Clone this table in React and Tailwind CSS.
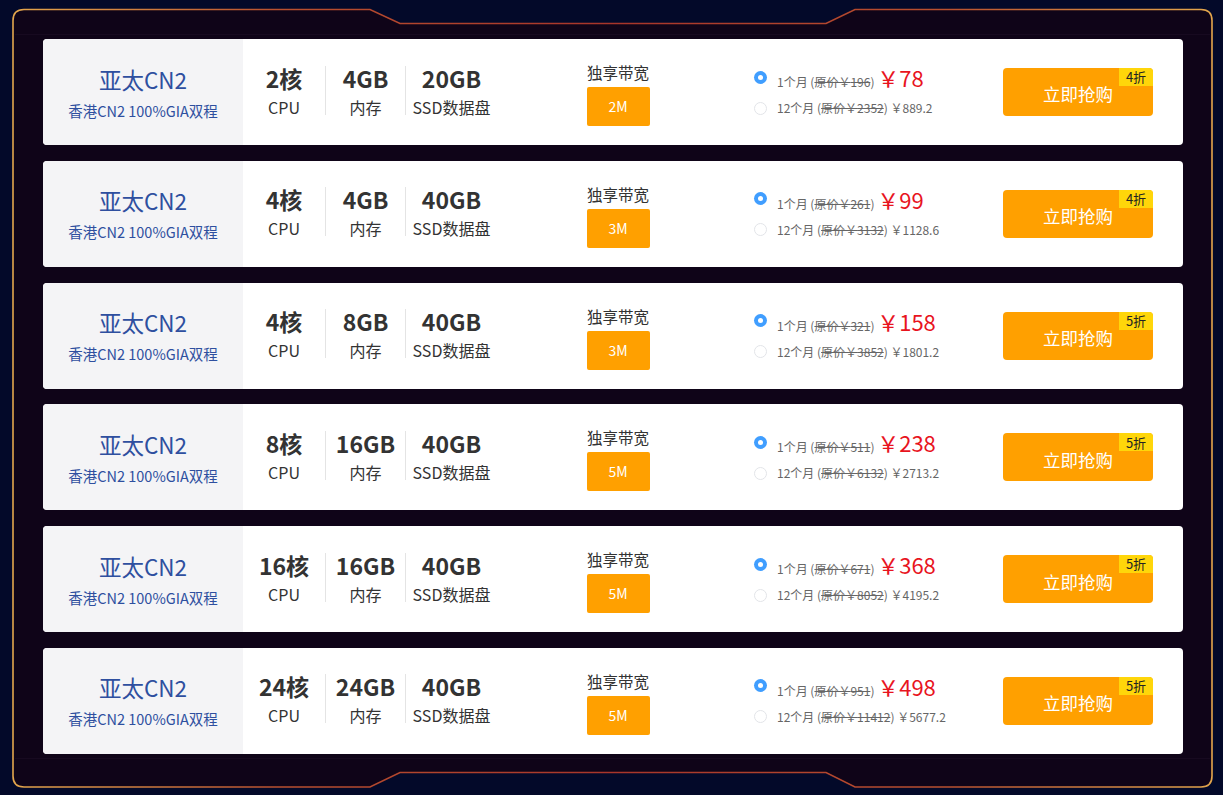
import React from 'react'

const plans = [
  { cpu: '2核', ram: '4GB', disk: '20GB', bw: '2M', orig: '196', price: '78', origYear: '2352', year: '889.2', off: '4折' },
  { cpu: '4核', ram: '4GB', disk: '40GB', bw: '3M', orig: '261', price: '99', origYear: '3132', year: '1128.6', off: '4折' },
  { cpu: '4核', ram: '8GB', disk: '40GB', bw: '3M', orig: '321', price: '158', origYear: '3852', year: '1801.2', off: '5折' },
  { cpu: '8核', ram: '16GB', disk: '40GB', bw: '5M', orig: '511', price: '238', origYear: '6132', year: '2713.2', off: '5折' },
  { cpu: '16核', ram: '16GB', disk: '40GB', bw: '5M', orig: '671', price: '368', origYear: '8052', year: '4195.2', off: '5折' },
  { cpu: '24核', ram: '24GB', disk: '40GB', bw: '5M', orig: '951', price: '498', origYear: '11412', year: '5677.2', off: '5折' },
]

function Frame() {
  return (
    <svg className="absolute inset-0" width="1223" height="795" viewBox="0 0 1223 795">
      <defs>
        <linearGradient id="edge" x1="0" y1="0" x2="1" y2="0">
          <stop offset="0%" stopColor="#e3a64c" />
          <stop offset="22%" stopColor="#b8502f" />
          <stop offset="50%" stopColor="#a8352a" />
          <stop offset="78%" stopColor="#b8502f" />
          <stop offset="100%" stopColor="#e3a64c" />
        </linearGradient>
      </defs>
      <path
        d="M24 9.5 H370 L400 23.5 H826 L855 9.5 H1201 Q1212 9.5 1212 20.5 V776 Q1212 787 1201 787 H855 L826 772.5 H400 L370 787 H24 Q13 787 13 776 V20.5 Q13 9.5 24 9.5 Z"
        fill="#0f0418"
        stroke="url(#edge)"
        strokeWidth="1.6"
      />
      <line x1="15" y1="34.5" x2="1210" y2="34.5" stroke="#170a20" strokeWidth="1" />
      <line x1="15" y1="758.5" x2="1210" y2="758.5" stroke="#170a20" strokeWidth="1" />
    </svg>
  )
}

function Radio({ on }) {
  return on ? (
    <span className="flex h-[13px] w-[13px] items-center justify-center rounded-full bg-[#409eff]">
      <span className="h-[5px] w-[5px] rounded-full bg-white" />
    </span>
  ) : (
    <span className="h-[13px] w-[13px] rounded-full border border-[#e2e4e8] bg-white" />
  )
}

function PlanRow({ p }) {
  return (
    <div className="flex h-[106px] overflow-hidden rounded-[4px] bg-[#fff]">
      <div className="flex w-[200px] flex-col items-center justify-center bg-[#f4f4f6] text-[#2e4f9f]">
        <p className="text-[22.5px] leading-[28px]">亚太CN2</p>
        <p className="mt-[9px] text-[14.5px] leading-[18px]">香港CN2 100%GIA双程</p>
      </div>

      <div className="flex w-[254px] items-center pb-[4px] text-[#333]">
        <div className="flex w-[82px] flex-col items-center">
          <p className="text-[23px] font-bold leading-[28px]">{p.cpu}</p>
          <p className="mt-[5px] text-[16px] leading-[20px]">CPU</p>
        </div>
        <div className="h-[49px] w-px bg-[#e4e4e4]" />
        <div className="flex w-[79px] flex-col items-center">
          <p className="text-[23px] font-bold leading-[28px]">{p.ram}</p>
          <p className="mt-[5px] text-[16px] leading-[20px]">内存</p>
        </div>
        <div className="h-[49px] w-px bg-[#e4e4e4]" />
        <div className="flex w-[91px] flex-col items-center">
          <p className="text-[23px] font-bold leading-[28px]">{p.disk}</p>
          <p className="mt-[5px] text-[16px] leading-[20px]">SSD数据盘</p>
        </div>
      </div>

      <div className="ml-[89px] flex w-[64px] flex-col items-center pt-[23px]">
        <p className="text-[15.5px] leading-[20px] text-[#333]">独享带宽</p>
        <div className="mt-[5px] flex h-[39px] w-[63px] items-center justify-center rounded-[2px] bg-[#ffa000] text-[14px] text-white">
          {p.bw}
        </div>
      </div>

      <div className="ml-[102px] flex w-[251px] flex-col justify-center pb-[2px] pl-[2px] text-[12px] text-[#666]">
        <div className="flex h-[28px] items-center gap-[10px]">
          <Radio on />
          <span>
            1个月 (<span className="line-through">原价￥{p.orig}</span>){' '}
            <span className="text-[22px] leading-[28px] text-[#e8141e]">￥{p.price}</span>
          </span>
        </div>
        <div className="mt-[6px] flex h-[22px] items-center gap-[10px]">
          <Radio />
          <span>
            12个月 (<span className="line-through">原价￥{p.origYear}</span>) ￥{p.year}
          </span>
        </div>
      </div>

      <div className="flex items-center">
        <div className="relative flex h-[48px] w-[150px] items-center justify-center rounded-[4px] bg-[#ffa000] pt-[5px] text-[17.5px] text-white">
          立即抢购
          <span className="absolute right-0 top-0 flex h-[18px] w-[34px] items-center justify-center rounded-tr-[4px] bg-[#ffd60a] text-[13px] text-[#222]">
            {p.off}
          </span>
        </div>
      </div>
    </div>
  )
}

export default function App() {
  return (
    <div
      className="relative h-[795px] w-[1223px] overflow-hidden bg-[#030929]"
      style={{ fontFamily: '"Noto Sans CJK SC", "Noto Sans", sans-serif' }}
    >
      <Frame />
      <div className="relative flex flex-col gap-[15.8px] pl-[43px] pr-[40px] pt-[39px]">
        {plans.map((p, i) => (
          <PlanRow key={i} p={p} />
        ))}
      </div>
    </div>
  )
}
